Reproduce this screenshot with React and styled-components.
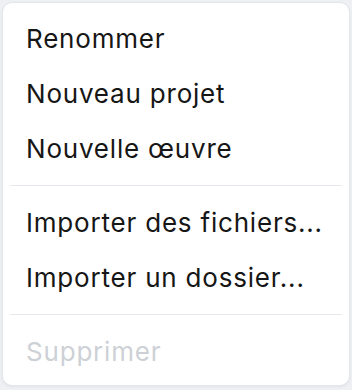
import React from 'react'
import styled, { createGlobalStyle } from 'styled-components'

const GlobalStyle = createGlobalStyle`
    html, body {
        margin: 0;
        padding: 0;
        background: #eef0f4;
    }
    body {
        font-family: Inter, "Noto Sans", sans-serif;
    }
`

const items = [
    [{ label: 'Renommer' }, { label: 'Nouveau projet' }, { label: 'Nouvelle œuvre' }],
    [{ label: 'Importer des fichiers...' }, { label: 'Importer un dossier...' }],
    [{ label: 'Supprimer', disabled: true }],
]

function App() {
    return (
        <>
            <GlobalStyle />
            <Page>
                <Menu role="menu">
                    {items.map((group, gi) => (
                        <React.Fragment key={gi}>
                            {/* a line between each group, not before the first */}
                            {gi > 0 && <Separator />}
                            {group.map(item => (
                                <Item key={item.label} role="menuitem" disabled={item.disabled}>
                                    {item.label}
                                </Item>
                            ))}
                        </React.Fragment>
                    ))}
                </Menu>
            </Page>
        </>
    )
}

export default App

const Page = styled.div`
    padding: 2px 2px 0 2px;
    width: 352px;
    height: 390px;
    box-sizing: border-box;
`

const Menu = styled.div`
    width: 348px;
    box-sizing: border-box;
    background: #ffffff;
    border: 1px solid #e3e6ea;
    border-radius: 10px;
    padding: 8px 7px 6px 7px;
    display: flex;
    flex-direction: column;
    box-shadow: 0 1px 3px rgba(15, 23, 42, 0.06);
`

const Item = styled.div`
    padding: 14px 16px;
    line-height: 27px;
    font-size: 26px;
    letter-spacing: 0.8px;
    color: ${props => (props.disabled ? '#cdd1d6' : '#161616')};
    border-radius: 6px;
    cursor: ${props => (props.disabled ? 'default' : 'pointer')};
    white-space: nowrap;
`

const Separator = styled.div`
    height: 1px;
    background: #e5e8ec;
    margin: 9px 0 9px 0;
`
